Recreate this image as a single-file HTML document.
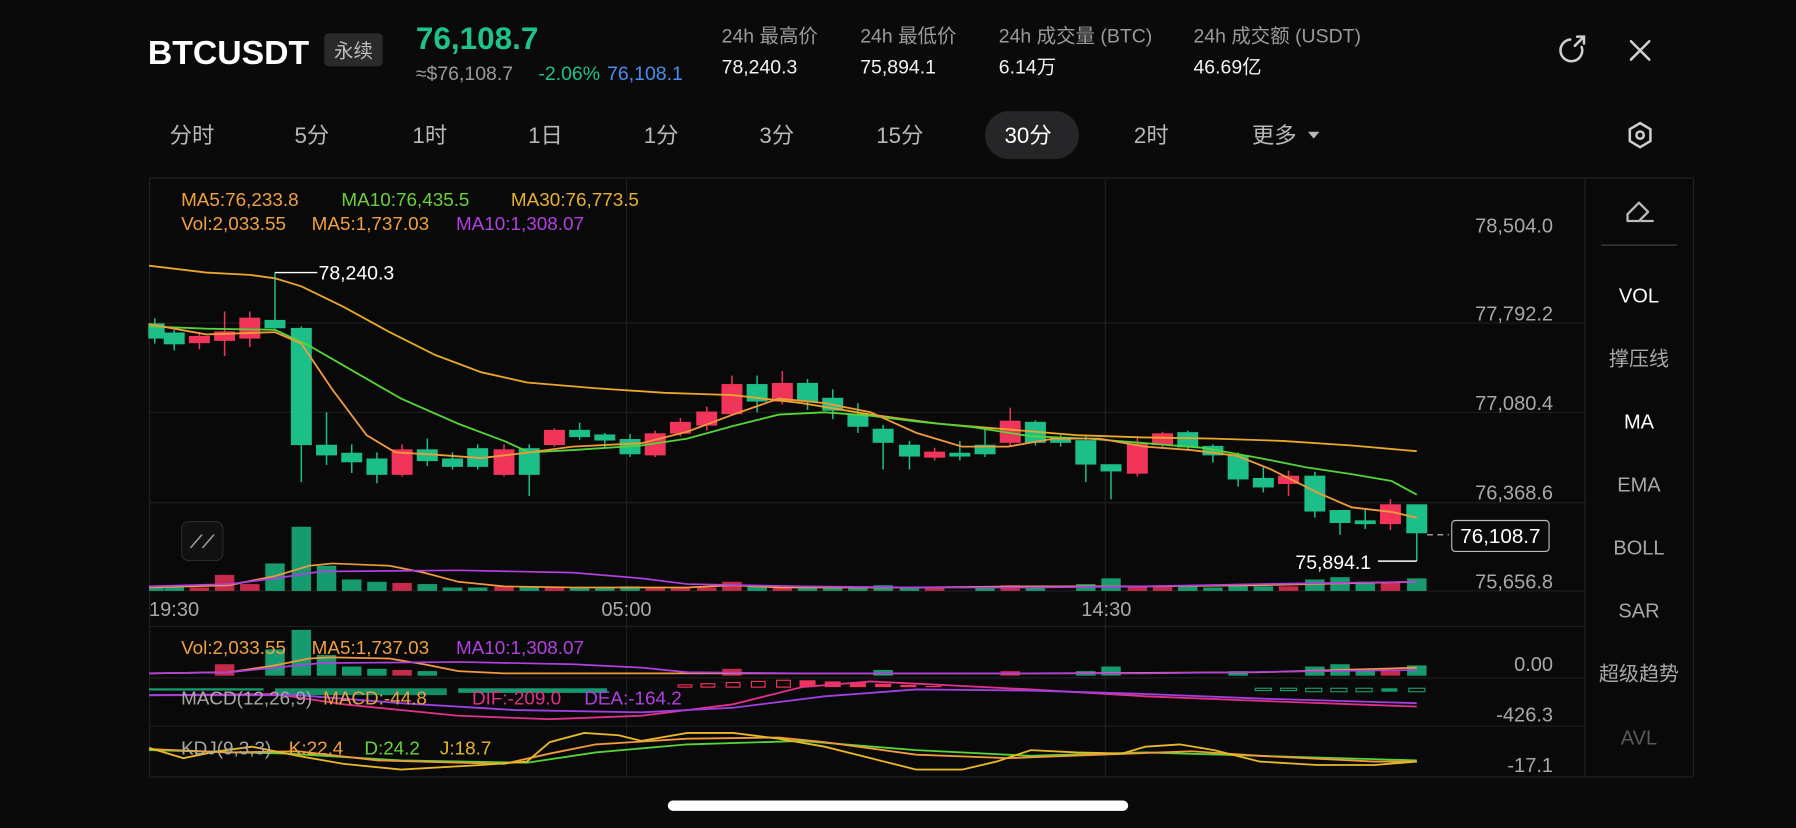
<!DOCTYPE html>
<html><head><meta charset="utf-8">
<style>
html,body{margin:0;padding:0;background:#0a0a0a;width:1796px;height:828px;overflow:hidden}
svg{display:block}
text{font-family:"Liberation Sans","Noto Sans CJK SC",sans-serif}
</style></head>
<body>
<svg width="1796" height="828" viewBox="0 0 1568 723" xmlns="http://www.w3.org/2000/svg">
<rect width="1568" height="723" fill="#0a0a0a"/>
<!-- header -->
<text x="129" y="56" fill="#fff" font-size="29.5" font-weight="bold">BTCUSDT</text>
<rect x="283" y="29" width="51" height="29" rx="4" fill="#2a2a2c"/>
<text x="308.5" y="50" fill="#bdbdbd" font-size="17" text-anchor="middle">永续</text>
<text x="363" y="43" fill="#1fc28a" font-size="27.5" font-weight="bold">76,108.7</text>
<text x="363" y="70" fill="#9a9a9a" font-size="17">≈$76,108.7</text>
<text x="470" y="70" fill="#1fc28a" font-size="17">-2.06%</text>
<text x="530" y="70" fill="#4a8cf0" font-size="17">76,108.1</text>
<g font-size="17" fill="#9a9a9a">
<text x="630" y="37">24h 最高价</text><text x="751" y="37">24h 最低价</text>
<text x="872" y="37">24h 成交量 (BTC)</text><text x="1042" y="37">24h 成交额 (USDT)</text></g>
<g font-size="17" fill="#f2f2f2">
<text x="630" y="64">78,240.3</text><text x="751" y="64">75,894.1</text>
<text x="872" y="64">6.14万</text><text x="1042" y="64">46.69亿</text></g>
<g stroke="#cfcfcf" stroke-width="2.2" fill="none" stroke-linecap="round">
<path d="M1381 41 A9.5 9.5 0 1 1 1371 34.5"/>
<path d="M1375 40 L1383 32 M1377 32 L1383 32 L1383 38"/>
<path d="M1424 36 L1440 52 M1440 36 L1424 52"/>
<path d="M1432 107.5 L1441 112.8 L1441 123.2 L1432 128.5 L1423 123.2 L1423 112.8 Z"/>
<circle cx="1432" cy="118" r="3.2"/>
</g>
<!-- tabs -->
<rect x="860" y="97" width="82" height="42" rx="21" fill="#262628"/>
<g font-size="19.5" fill="#b8b8b8">
<text x="148" y="125">分时</text><text x="257" y="125">5分</text><text x="360" y="125">1时</text>
<text x="461" y="125">1日</text><text x="562" y="125">1分</text><text x="663" y="125">3分</text>
<text x="765" y="125">15分</text><text x="877" y="125" fill="#fff">30分</text>
<text x="990" y="125">2时</text><text x="1093" y="125">更多</text></g>
<path d="M1142 115 L1152 115 L1147 121 Z" fill="#b8b8b8"/>
<!-- chart frame -->
<rect x="130.5" y="155.5" width="1348" height="523" fill="#090909" stroke="#222" stroke-width="1"/>
<line x1="1384" y1="155" x2="1384" y2="678" stroke="#222"/>
<g stroke="#1f1f1f" stroke-width="1">
<line x1="130" y1="282" x2="1384" y2="282"/><line x1="130" y1="360" x2="1384" y2="360"/>
<line x1="130" y1="439" x2="1384" y2="439"/><line x1="130" y1="516" x2="1384" y2="516"/>
<line x1="130" y1="547" x2="1384" y2="547"/><line x1="130" y1="592" x2="1384" y2="592"/>
<line x1="130" y1="634" x2="1384" y2="634"/>
<line x1="547" y1="155" x2="547" y2="678"/><line x1="965" y1="155" x2="965" y2="678"/>
</g>
<g font-size="17.5" fill="#a8a8a8" text-anchor="end">
<text x="1356" y="203">78,504.0</text><text x="1356" y="280">77,792.2</text>
<text x="1356" y="358">77,080.4</text><text x="1356" y="436">76,368.6</text>
<text x="1356" y="514">75,656.8</text>
<text x="1356" y="586">0.00</text><text x="1356" y="630">-426.3</text><text x="1356" y="674">-17.1</text></g>
<g font-size="17.5" fill="#a8a8a8">
<text x="130" y="538">19:30</text><text x="525" y="538">05:00</text><text x="944" y="538">14:30</text></g>
<!-- right panel -->
<g stroke="#bbb" stroke-width="2" fill="none" stroke-linejoin="round" stroke-linecap="round">
<path d="M1421 193 L1421 187 L1431 177 L1439 185 L1431 193 Z"/><path d="M1433 193 L1443 193"/></g>
<line x1="1398" y1="214" x2="1464" y2="214" stroke="#333" stroke-width="1.5"/>
<g font-size="17.5" text-anchor="middle" fill="#a8a8a8">
<text x="1431" y="264" fill="#fff">VOL</text><text x="1431" y="319">撑压线</text>
<text x="1431" y="374" fill="#fff">MA</text><text x="1431" y="429">EMA</text>
<text x="1431" y="484">BOLL</text><text x="1431" y="539">SAR</text>
<text x="1431" y="594">超级趋势</text><text x="1431" y="650" fill="#5a5a5a">AVL</text></g>
<g font-size="16.5">
<text x="158" y="180" fill="#f0a040">MA5:76,233.8</text>
<text x="298" y="180" fill="#6ad13a">MA10:76,435.5</text>
<text x="446" y="180" fill="#e8b030">MA30:76,773.5</text>
<text x="158" y="201" fill="#f0a040">Vol:2,033.55</text>
<text x="272" y="201" fill="#f0a040">MA5:1,737.03</text>
<text x="398" y="201" fill="#b040e0">MA10:1,308.07</text>
</g>
<!-- candles -->
<g stroke-width="1.3">
<g fill="#1dbf88" stroke="#1dbf88">
<line x1="135" y1="278" x2="135" y2="300"/><rect x="130" y="283" width="13" height="12"/>
<line x1="152" y1="288" x2="152" y2="306"/><rect x="143.5" y="291" width="17" height="9"/>
<line x1="240" y1="238" x2="240" y2="287"/><rect x="231.5" y="280" width="17" height="6"/>
<line x1="263" y1="285" x2="263" y2="421"/><rect x="254.5" y="287" width="17" height="101"/>
<line x1="285" y1="360" x2="285" y2="406"/><rect x="276.5" y="389" width="17" height="8"/>
<line x1="307" y1="388" x2="307" y2="413"/><rect x="298.5" y="396" width="17" height="7"/>
<line x1="329" y1="395" x2="329" y2="422"/><rect x="320.5" y="401" width="17" height="13"/>
<line x1="373" y1="383" x2="373" y2="407"/><rect x="364.5" y="393" width="17" height="9"/>
<line x1="395" y1="395" x2="395" y2="410"/><rect x="386.5" y="401" width="17" height="6"/>
<line x1="417" y1="388" x2="417" y2="410"/><rect x="408.5" y="392" width="17" height="15"/>
<line x1="462" y1="388" x2="462" y2="433"/><rect x="453.5" y="392" width="17" height="22"/>
<line x1="506" y1="369" x2="506" y2="384"/><rect x="497.5" y="376" width="17" height="5"/>
<line x1="528" y1="378" x2="528" y2="392"/><rect x="519.5" y="380" width="17" height="4"/>
<line x1="550" y1="379" x2="550" y2="399"/><rect x="541.5" y="384" width="17" height="12"/>
<line x1="661" y1="328" x2="661" y2="360"/><rect x="652.5" y="336" width="17" height="14"/>
<line x1="705" y1="331" x2="705" y2="358"/><rect x="696.5" y="335" width="17" height="15"/>
<line x1="727" y1="340" x2="727" y2="366"/><rect x="718.5" y="348" width="17" height="10"/>
<line x1="749" y1="352" x2="749" y2="378"/><rect x="740.5" y="362" width="17" height="10"/>
<line x1="771" y1="371" x2="771" y2="410"/><rect x="762.5" y="375" width="17" height="11"/>
<line x1="794" y1="385" x2="794" y2="410"/><rect x="785.5" y="389" width="17" height="9"/>
<line x1="838" y1="385" x2="838" y2="402"/><rect x="829.5" y="396" width="17" height="2"/>
<line x1="860" y1="375" x2="860" y2="399"/><rect x="851.5" y="389" width="17" height="7"/>
<line x1="904" y1="367" x2="904" y2="389"/><rect x="895.5" y="369" width="17" height="17"/>
<line x1="926" y1="380" x2="926" y2="390"/><rect x="917.5" y="383" width="17" height="3"/>
<line x1="948" y1="381" x2="948" y2="421"/><rect x="939.5" y="385" width="17" height="20"/>
<line x1="970" y1="406" x2="970" y2="436"/><rect x="961.5" y="406" width="17" height="5"/>
<line x1="1037" y1="376" x2="1037" y2="392"/><rect x="1028.5" y="378" width="17" height="12"/>
<line x1="1059" y1="388" x2="1059" y2="404"/><rect x="1050.5" y="390" width="17" height="7"/>
<line x1="1081" y1="395" x2="1081" y2="425"/><rect x="1072.5" y="398" width="17" height="20"/>
<line x1="1103" y1="408" x2="1103" y2="430"/><rect x="1094.5" y="418" width="17" height="7"/>
<line x1="1148" y1="412" x2="1148" y2="452"/><rect x="1139.5" y="416" width="17" height="30"/>
<line x1="1170" y1="446" x2="1170" y2="467"/><rect x="1161.5" y="446" width="17" height="10"/>
<line x1="1192" y1="445" x2="1192" y2="462"/><rect x="1183.5" y="455" width="17" height="2"/>
<line x1="1237" y1="441" x2="1237" y2="490"/><rect x="1228.5" y="441" width="17" height="24"/>
</g>
<g fill="#f0345a" stroke="#f0345a">
<line x1="174" y1="290" x2="174" y2="305"/><rect x="165.5" y="294" width="17" height="5"/>
<line x1="196" y1="272" x2="196" y2="311"/><rect x="187.5" y="290" width="17" height="7"/>
<line x1="218" y1="272" x2="218" y2="303"/><rect x="209.5" y="278" width="17" height="17"/>
<line x1="351" y1="388" x2="351" y2="416"/><rect x="342.5" y="393" width="17" height="21"/>
<line x1="440" y1="388" x2="440" y2="416"/><rect x="431.5" y="393" width="17" height="21"/>
<line x1="484" y1="374" x2="484" y2="390"/><rect x="475.5" y="376" width="17" height="12"/>
<line x1="572" y1="376" x2="572" y2="399"/><rect x="563.5" y="379" width="17" height="18"/>
<line x1="594" y1="365" x2="594" y2="381"/><rect x="585.5" y="369" width="17" height="9"/>
<line x1="617" y1="355" x2="617" y2="376"/><rect x="608.5" y="360" width="17" height="11"/>
<line x1="639" y1="328" x2="639" y2="363"/><rect x="630.5" y="336" width="17" height="25"/>
<line x1="683" y1="324" x2="683" y2="353"/><rect x="674.5" y="335" width="17" height="15"/>
<line x1="816" y1="391" x2="816" y2="402"/><rect x="807.5" y="395" width="17" height="4"/>
<line x1="882" y1="356" x2="882" y2="389"/><rect x="873.5" y="368" width="17" height="18"/>
<line x1="993" y1="381" x2="993" y2="416"/><rect x="984.5" y="388" width="17" height="25"/>
<line x1="1015" y1="377" x2="1015" y2="391"/><rect x="1006.5" y="379" width="17" height="9"/>
<line x1="1125" y1="411" x2="1125" y2="433"/><rect x="1116.5" y="416" width="17" height="6"/>
<line x1="1214" y1="436" x2="1214" y2="463"/><rect x="1205.5" y="441" width="17" height="16"/>
</g></g>
<g fill="none" stroke-width="1.6">
<polyline stroke="#e8a82a" points="130,232 180,238 218,240 240,243 263,250 300,268 340,290 380,310 420,325 460,334 520,339 580,343 640,345 700,352 760,362 820,370 880,375 940,380 1000,382 1060,383 1120,385 1180,389 1237,394"/>
<polyline stroke="#55d43a" points="130,285 180,287 240,288 270,302 310,325 350,348 400,370 440,385 462,395 500,393 560,389 600,383 640,372 680,362 720,360 760,363 800,368 850,373 900,381 950,383 1000,387 1050,391 1100,400 1140,408 1180,414 1215,420 1237,432"/>
<polyline stroke="#f09a3c" points="130,283 180,292 240,290 263,300 290,340 320,380 345,395 380,397 420,400 462,395 500,390 560,387 600,377 640,362 680,348 720,352 760,360 800,378 840,390 880,390 920,383 960,383 1000,390 1040,393 1080,398 1110,410 1150,430 1180,443 1215,447 1237,452"/>
</g>
<line x1="240" y1="238" x2="277" y2="238" stroke="#fff" stroke-width="1.3"/>
<text x="278" y="244" fill="#fff" font-size="17">78,240.3</text>
<line x1="1203" y1="490" x2="1237" y2="490" stroke="#fff" stroke-width="1.3"/>
<text x="1131" y="497" fill="#fff" font-size="17">75,894.1</text>
<line x1="1246" y1="467" x2="1265" y2="467" stroke="#ccc" stroke-dasharray="5,4"/>
<rect x="1267.5" y="454.5" width="85" height="27" rx="3" fill="#0a0a0a" stroke="#bbb"/>
<text x="1310" y="474" fill="#fff" font-size="18" text-anchor="middle">76,108.7</text>
<rect x="158.5" y="455.5" width="36" height="34" rx="6" fill="#111" stroke="#2a2a2a"/>
<text x="176.5" y="478" fill="#999" font-size="15" text-anchor="middle" font-weight="bold">⟋⟋</text>
<!-- volume main -->
<g fill="#169a70">
<rect x="130" y="513" width="13" height="3"/><rect x="143.5" y="512" width="17" height="4"/>
<rect x="231.5" y="492" width="17" height="24"/><rect x="254.5" y="460" width="17" height="56"/>
<rect x="276.5" y="494" width="17" height="22"/><rect x="298.5" y="506" width="17" height="10"/>
<rect x="320.5" y="508" width="17" height="8"/><rect x="364.5" y="510" width="17" height="6"/>
<rect x="386.5" y="513" width="17" height="3"/><rect x="408.5" y="513" width="17" height="3"/>
<rect x="453.5" y="512" width="17" height="4"/><rect x="497.5" y="513" width="17" height="3"/>
<rect x="519.5" y="513" width="17" height="3"/><rect x="541.5" y="512" width="17" height="4"/>
<rect x="652.5" y="512" width="17" height="4"/><rect x="696.5" y="513" width="17" height="3"/>
<rect x="718.5" y="513" width="17" height="3"/><rect x="740.5" y="512" width="17" height="4"/>
<rect x="762.5" y="511" width="17" height="5"/><rect x="785.5" y="513" width="17" height="3"/>
<rect x="851.5" y="513" width="17" height="3"/><rect x="895.5" y="512" width="17" height="4"/>
<rect x="939.5" y="510" width="17" height="6"/><rect x="961.5" y="505" width="17" height="11"/>
<rect x="1028.5" y="512" width="17" height="4"/><rect x="1050.5" y="513" width="17" height="3"/>
<rect x="1072.5" y="510" width="17" height="6"/><rect x="1094.5" y="512" width="17" height="4"/>
<rect x="1139.5" y="506" width="17" height="10"/><rect x="1161.5" y="504" width="17" height="12"/>
<rect x="1183.5" y="508" width="17" height="8"/><rect x="1228.5" y="505" width="17" height="11"/>
</g>
<g fill="#c42a4a">
<rect x="165.5" y="513" width="17" height="3"/><rect x="187.5" y="502" width="17" height="14"/>
<rect x="209.5" y="510" width="17" height="6"/><rect x="342.5" y="509" width="17" height="7"/>
<rect x="431.5" y="512" width="17" height="4"/><rect x="475.5" y="513" width="17" height="3"/>
<rect x="563.5" y="513" width="17" height="3"/><rect x="585.5" y="513" width="17" height="3"/>
<rect x="608.5" y="513" width="17" height="3"/><rect x="630.5" y="508" width="17" height="8"/>
<rect x="674.5" y="513" width="17" height="3"/><rect x="807.5" y="513" width="17" height="3"/>
<rect x="873.5" y="511" width="17" height="5"/><rect x="984.5" y="512" width="17" height="4"/>
<rect x="1006.5" y="512" width="17" height="4"/><rect x="1116.5" y="512" width="17" height="4"/>
<rect x="1205.5" y="509" width="17" height="7"/>
</g>
<polyline fill="none" stroke="#f09a3c" stroke-width="1.5" points="130,513 200,511 240,503 270,494 290,492 340,494 370,500 400,508 440,512 500,513 600,513 640,511 680,513 800,513 900,512 1000,512 1100,511 1237,508"/>
<polyline fill="none" stroke="#b040e0" stroke-width="1.5" points="130,512 200,510 240,505 280,499 400,498 500,500 560,505 600,510 700,512 800,513 900,513 1000,512 1100,510 1237,508"/>
<!-- sub volume pane -->
<g fill="#169a70">
<rect x="231.5" y="567" width="17" height="23"/><rect x="254.5" y="550" width="17" height="40"/>
<rect x="276.5" y="572" width="17" height="18"/><rect x="298.5" y="582" width="17" height="8"/>
<rect x="320.5" y="584" width="17" height="6"/><rect x="364.5" y="586" width="17" height="4"/>
<rect x="961.5" y="582" width="17" height="8"/><rect x="1139.5" y="582" width="17" height="8"/>
<rect x="1161.5" y="580" width="17" height="10"/><rect x="1183.5" y="584" width="17" height="6"/>
<rect x="1228.5" y="581" width="17" height="9"/><rect x="762.5" y="585" width="17" height="5"/>
<rect x="939.5" y="586" width="17" height="4"/><rect x="1072.5" y="586" width="17" height="4"/>
</g>
<g fill="#c42a4a">
<rect x="187.5" y="580" width="17" height="10"/><rect x="342.5" y="585" width="17" height="5"/>
<rect x="630.5" y="584" width="17" height="6"/><rect x="873.5" y="586" width="17" height="4"/>
<rect x="1205.5" y="585" width="17" height="5"/>
</g>
<polyline fill="none" stroke="#f09a3c" stroke-width="1.5" points="130,588 200,587 240,581 270,575 290,574 340,575 370,580 400,586 440,588 600,588 700,588 900,588 1100,587 1237,583"/>
<polyline fill="none" stroke="#b040e0" stroke-width="1.5" points="130,588 200,587 240,583 280,579 400,578 500,580 560,583 600,587 700,588 1000,588 1237,585"/>
<!-- MACD -->
<g fill="none" stroke-width="1">
<g stroke="#f0345a">
<rect x="592" y="598" width="12" height="2"/><rect x="612" y="597" width="12" height="3"/>
<rect x="634" y="596" width="12" height="4"/><rect x="656" y="595" width="12" height="5"/>
<rect x="678" y="594" width="12" height="6"/></g>
<g fill="#f0345a" stroke="none">
<rect x="698" y="594" width="14" height="6"/><rect x="720" y="595" width="14" height="5"/>
<rect x="742" y="596" width="14" height="4"/><rect x="764" y="597" width="14" height="3"/>
<rect x="786" y="598" width="14" height="2"/><rect x="808" y="599" width="14" height="1"/></g>
<g stroke="#169a70">
<rect x="1096" y="601" width="14" height="2"/><rect x="1118" y="601" width="14" height="2"/>
<rect x="1140" y="601" width="14" height="3"/><rect x="1162" y="601" width="14" height="3"/>
<rect x="1184" y="601" width="14" height="3"/><rect x="1230" y="601" width="14" height="3"/></g>
<rect x="1206" y="601" width="14" height="3" fill="#169a70" stroke="none"/>
<g fill="#169a70" stroke="none"><rect x="240" y="601" width="150" height="6" opacity=".9"/><rect x="400" y="601" width="130" height="4"/><rect x="130" y="601" width="100" height="2"/></g>
<polyline stroke="#e0308a" stroke-width="1.6" points="130,607 240,606 300,615 400,625 480,628 560,625 640,615 700,600 760,595 820,598 900,602 1000,608 1100,612 1237,617"/>
<polyline stroke="#a040e0" stroke-width="1.6" points="130,607 260,607 350,614 450,620 560,622 640,618 720,608 800,602 900,603 1000,606 1100,610 1237,614"/>
</g>
<g font-size="16.5">
<text x="158" y="615" fill="#a8a8a8">MACD(12,26,9)</text>
<text x="282" y="615" fill="#f0a040">MACD:-44.8</text>
<text x="412" y="615" fill="#e0308a">DIF:-209.0</text>
<text x="510" y="615" fill="#b040e0">DEA:-164.2</text>
</g>
<!-- KDJ -->
<g fill="none" stroke-width="1.6">
<polyline stroke="#55d43a" points="130,655 250,658 350,664 460,666 520,657 600,650 700,647 800,655 900,660 1000,657 1100,660 1237,664"/>
<polyline stroke="#f09a3c" points="130,654 200,657 260,656 330,664 440,667 480,658 520,650 600,645 680,644 720,648 800,659 880,662 960,659 1040,656 1100,660 1200,665 1237,665"/>
<polyline stroke="#e8b828" points="130,653 160,662 190,656 220,652 260,660 300,667 350,672 420,668 460,665 480,648 510,640 540,642 560,647 600,640 640,640 680,645 720,652 760,662 800,672 840,672 870,665 900,655 940,657 980,658 1000,652 1030,650 1060,655 1100,665 1150,668 1200,668 1237,665"/>
</g>
<g font-size="16.5">
<text x="158" y="659" fill="#a8a8a8">KDJ(9,3,3)</text>
<text x="252" y="659" fill="#f0a040">K:22.4</text>
<text x="318" y="659" fill="#6ad13a">D:24.2</text>
<text x="384" y="659" fill="#e8b828">J:18.7</text>
</g>
<g font-size="16.5">
<text x="158" y="571" fill="#f0a040">Vol:2,033.55</text>
<text x="272" y="571" fill="#f0a040">MA5:1,737.03</text>
<text x="398" y="571" fill="#b040e0">MA10:1,308.07</text>
</g>
<rect x="583" y="699" width="402" height="9" rx="4.5" fill="#fff"/>
</svg>
</body></html>
